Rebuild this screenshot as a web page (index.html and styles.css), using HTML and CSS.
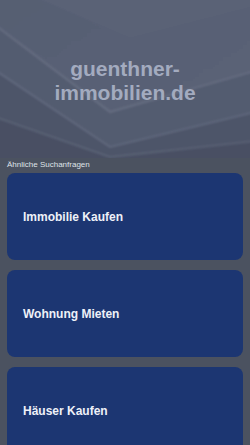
FILE: index.html
```html
<!DOCTYPE html>
<html lang="de">
<head>
<meta charset="utf-8">
<title>guenthner-immobilien.de</title>
<link rel="stylesheet" href="styles.css">
</head>
<body>
<header class="hero">
  <svg class="hero-bg" width="250" height="158" viewBox="0 0 250 158" preserveAspectRatio="none" aria-hidden="true">
    <defs>
      <filter id="soft" x="-5%" y="-5%" width="110%" height="110%">
        <feGaussianBlur stdDeviation="1.2"/>
      </filter>
      <linearGradient id="topfade" x1="0" y1="0" x2="1" y2="1">
        <stop offset="0" stop-color="#565e72"/>
        <stop offset="1" stop-color="#5c6478"/>
      </linearGradient>
    </defs>
    <g filter="url(#soft)">
      <rect x="-5" y="-5" width="260" height="170" fill="url(#topfade)"/>
      <polygon points="-5,0 30,-5 130,38 255,6 255,-5 -5,-5" fill="#5a6276"/>
      <polygon points="-5,25 110,112 255,71 255,165 -5,165" fill="#535b6f"/>
      <polyline points="-5,25 110,112 255,71" fill="none" stroke="#687084" stroke-width="1.6"/>
      <polygon points="-5,70 110,147 255,112 255,165 -5,165" fill="#4d5569"/>
      <polyline points="-5,70 110,147 255,112" fill="none" stroke="#646c80" stroke-width="1.6"/>
      <polygon points="-5,117 110,157 255,141 255,165 -5,165" fill="#485064"/>
      <polyline points="-5,117 110,157 255,141" fill="none" stroke="#5e6679" stroke-width="1.4"/>
    </g>
  </svg>
  <h1 class="hero-title">guenthner-<br>immobilien.de</h1>
</header>
<main class="content">
  <div class="label">Ähnliche Suchanfragen</div>
  <ul class="cards">
    <li class="card"><a href="#">Immobilie Kaufen</a></li>
    <li class="card"><a href="#">Wohnung Mieten</a></li>
    <li class="card"><a href="#">Häuser Kaufen</a></li>
  </ul>
</main>
</body>
</html>
```

FILE: styles.css
```css
html, body {
  margin: 0;
  padding: 0;
  background: #4b5260;
  font-family: "Liberation Sans", Arial, sans-serif;
  overflow: hidden;
}

.hero {
  position: relative;
  height: 158px;
  display: flex;
  align-items: flex-start;
  justify-content: center;
  overflow: hidden;
}

.hero-bg {
  position: absolute;
  left: 0;
  top: 0;
  width: 100%;
  height: 100%;
}

.hero-title {
  position: relative;
  margin: 0;
  padding-top: 57px;
  font-size: 21px;
  line-height: 24px;
  font-weight: bold;
  color: #a3abbf;
  text-align: center;
}

.content {
  padding: 0 7px;
}

.label {
  font-size: 8px;
  line-height: 12px;
  padding: 1px 0 2px;
  color: #dfe2e8;
}

.cards {
  list-style: none;
  margin: 0;
  padding: 0;
  display: flex;
  flex-direction: column;
  gap: 10px;
}

.card {
  height: 87px;
  background: #1c3672;
  border-radius: 8px;
  display: flex;
  align-items: center;
  padding: 0 16px;
}

.card a {
  color: #eef1f8;
  text-decoration: none;
  font-size: 12px;
  font-weight: bold;
}
```
